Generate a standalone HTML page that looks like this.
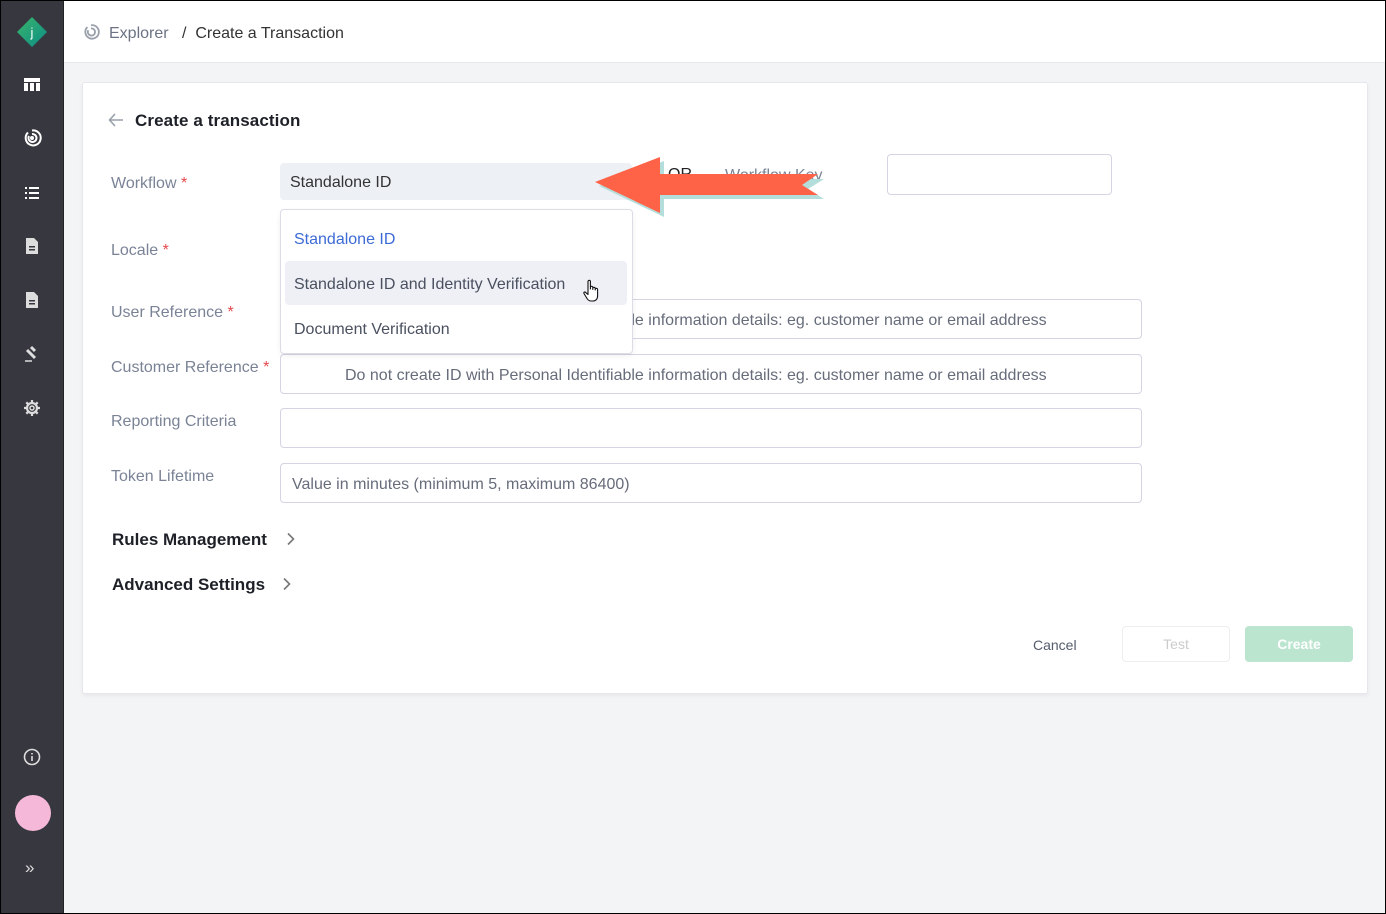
<!DOCTYPE html>
<html><head><meta charset="utf-8"><style>
*{box-sizing:border-box;margin:0;padding:0}
body{width:1386px;height:914px;overflow:hidden;font-family:"Liberation Sans",sans-serif;background:#f3f4f6;position:relative}
.frame{position:absolute;left:0;top:0;width:1386px;height:914px;border:1px solid #000;z-index:50;pointer-events:none}
.side{position:absolute;left:0;top:0;width:64px;height:914px;background:#373740;border-right:1px solid #222}
.ic{position:absolute;left:22px;width:20px;height:20px}
.top{position:absolute;left:64px;top:0;right:0;height:63px;background:#fff;border-bottom:1px solid #e8e9ee}
.card{position:absolute;left:82px;top:82px;width:1286px;height:612px;background:#fff;border:1px solid #e6e8ee;border-radius:3px;box-shadow:0 2px 4px rgba(0,0,0,.05)}
.lbl{position:absolute;left:111px;font-size:16px;color:#7a8396;margin-top:1px}
.lbl b{color:#e5484d;font-weight:normal}
.inp{position:absolute;left:280px;width:862px;height:40px;border:1px solid #d4d4e2;border-radius:4px;background:#fff;font-size:16px;color:#666c7a;line-height:42px}
.t{position:absolute;font-size:16px;margin-top:1px}
</style></head><body>
<div class="frame"></div>
<div class="side">
 <svg style="position:absolute;left:16px;top:16px" width="32" height="32" viewBox="0 0 32 32"><defs><linearGradient id="g" x1="0" y1="0" x2="1" y2="1"><stop offset="0" stop-color="#3bb36a"/><stop offset="1" stop-color="#0b8f86"/></linearGradient></defs><path d="M16 1L31 16 16 31 1 16z" fill="url(#g)"/><text x="16" y="21" font-size="13" fill="#fff" text-anchor="middle" font-family="Liberation Sans">j</text></svg>
 <svg class="ic" style="top:75px" viewBox="0 0 20 20" fill="#fff"><rect x="2" y="3" width="16" height="4"/><rect x="2" y="8" width="4" height="8"/><rect x="8" y="8" width="4" height="8"/><rect x="14" y="8" width="4" height="8"/></svg>
 <svg class="ic" style="top:128px" viewBox="0 0 20 20" fill="none" stroke="#fff" stroke-width="2"><path d="M6 4.5A7.5 7.5 0 1 0 10 2.5"/><path d="M7 8a4 4 0 1 0 3-2"/><circle cx="10" cy="10" r="1" fill="#fff"/></svg>
 <svg class="ic" style="top:183px" viewBox="0 0 20 20" fill="#fff"><rect x="3" y="4" width="2" height="2"/><rect x="7" y="4" width="10" height="2"/><rect x="3" y="9" width="2" height="2"/><rect x="7" y="9" width="10" height="2"/><rect x="3" y="14" width="2" height="2"/><rect x="7" y="14" width="10" height="2"/></svg>
 <svg class="ic" style="top:236px" viewBox="0 0 20 20"><path d="M4 2h8l4 4v12H4z" fill="#ddd"/><rect x="7" y="10" width="6" height="1.5" fill="#373740"/><rect x="7" y="13" width="6" height="1.5" fill="#373740"/></svg>
 <svg class="ic" style="top:290px" viewBox="0 0 20 20"><path d="M4 2h8l4 4v12H4z" fill="#ddd"/><rect x="7" y="10" width="6" height="1.5" fill="#373740"/><rect x="7" y="13" width="6" height="1.5" fill="#373740"/></svg>
 <svg class="ic" style="top:344px" viewBox="0 0 20 20" stroke="#ddd" stroke-width="3" fill="none"><path d="M5 6l8 8"/><path d="M9 3l4 4"/><path d="M3 17h7" stroke-width="1.5"/></svg>
 <svg class="ic" style="top:398px" viewBox="0 0 20 20" fill="none" stroke="#ddd" stroke-width="2.2"><circle cx="10" cy="10" r="5"/><circle cx="10" cy="10" r="2" stroke-width="1.5"/><path d="M10 2v3M10 15v3M2 10h3M15 10h3M4.3 4.3l2 2M13.7 13.7l2 2M4.3 15.7l2-2M13.7 6.3l2-2"/></svg>
 <svg class="ic" style="top:747px" viewBox="0 0 20 20" fill="none" stroke="#ddd" stroke-width="1.6"><circle cx="10" cy="10" r="7.5"/><path d="M10 9v5M10 6v1.5"/></svg>
 <div style="position:absolute;left:15px;top:795px;width:36px;height:36px;border-radius:50%;background:#f5b8d9"></div>
 <div style="position:absolute;left:25px;top:858px;color:#ddd;font-size:17px">»</div>
</div>
<div class="top">
 <svg style="position:absolute;left:18px;top:23px" width="18" height="18" viewBox="0 0 20 20" fill="none" stroke="#9aa0ab" stroke-width="2"><path d="M6 4.5A7.5 7.5 0 1 0 10 2.5"/><path d="M7 8a4 4 0 1 0 3-2"/></svg>
 <div class="t" style="left:45px;top:24px;font-size:16px;color:#6b7384">Explorer</div>
 <div class="t" style="left:118px;top:24px;font-size:16px;color:#333">/ &nbsp;Create a Transaction</div>
</div>
<div class="card"></div>
<svg style="position:absolute;left:108px;top:113px" width="16" height="14" viewBox="0 0 16 14" fill="none" stroke="#9aa0ab" stroke-width="1.6"><path d="M15 7H2M7 1L1.5 7 7 13"/></svg>
<div class="t" style="left:135px;top:110px;font-size:17px;color:#1d2027;font-weight:bold;letter-spacing:.1px">Create a transaction</div>
<div class="lbl" style="top:174px">Workflow <b>*</b></div>
<div class="lbl" style="top:241px">Locale <b>*</b></div>
<div class="lbl" style="top:303px">User Reference <b>*</b></div>
<div class="lbl" style="top:358px">Customer Reference <b>*</b></div>
<div class="lbl" style="top:412px">Reporting Criteria</div>
<div class="lbl" style="top:467px">Token Lifetime</div>
<div style="position:absolute;left:280px;top:163px;width:352px;height:37px;background:#edf0f5;border-radius:4px;font-size:16px;color:#333;line-height:39px;padding-left:10px">Standalone ID</div>
<div class="t" style="left:668px;top:165px;color:#222">OR</div>
<div class="t" style="left:725px;top:166px;color:#7a8396">Workflow Key</div>
<div style="position:absolute;left:887px;top:154px;width:225px;height:41px;border:1px solid #d4d4e2;border-radius:4px"></div>
<div class="inp" style="top:299px;padding-left:64px">Do not create ID with Personal Identifiable information details: eg. customer name or email address</div>
<div class="inp" style="top:354px;padding-left:64px">Do not create ID with Personal Identifiable information details: eg. customer name or email address</div>
<div class="inp" style="top:408px"></div>
<div class="inp" style="top:463px;padding-left:11px">Value in minutes (minimum 5, maximum 86400)</div>
<div style="position:absolute;left:280px;top:209px;width:353px;height:145px;background:#fff;border:1px solid #dcdce6;border-radius:4px;box-shadow:0 2px 6px rgba(0,0,0,.06)">
 <div style="position:absolute;left:4px;top:51px;width:342px;height:44px;background:#eef0f5;border-radius:4px"></div>
 <div class="t" style="left:13px;top:20px;color:#3c6ad6">Standalone ID</div>
 <div class="t" style="left:13px;top:65px;color:#4a5060">Standalone ID and Identity Verification</div>
 <div class="t" style="left:13px;top:110px;color:#4a5060">Document Verification</div>
 <svg style="position:absolute;left:302px;top:69px" width="16" height="24" viewBox="0 0 16 24"><path d="M5 2.5a1.2 1.2 0 0 1 2.4 0V10h0V8.5a1.2 1.2 0 0 1 2.4 0V10.5V9.5a1.2 1.2 0 0 1 2.4 0V11V10.5a1.2 1.2 0 0 1 2.4 0V17c0 3-2 5-4.5 5H8c-2 0-3-1-4-2.5L1 14.5c-.6-1 .6-2 1.5-1.2L5 15.5z" fill="#fff" stroke="#111" stroke-width="1.1" stroke-linejoin="round"/></svg>
</div>
<svg style="position:absolute;left:590px;top:150px" width="240" height="75" viewBox="590 150 240 75">
 <path d="M599 186L664 161V179H824L808 189L824 199H664V217Z" fill="#b3dedb"/>
 <path d="M595 182L660 157V174H818L802 185L818 195H660V213Z" fill="#ff6347"/>
</svg>
<div class="t" style="left:112px;top:529px;font-size:17px;color:#1d2027;font-weight:bold">Rules Management</div>
<svg style="position:absolute;left:286px;top:532px" width="10" height="14" viewBox="0 0 10 14" fill="none" stroke="#777" stroke-width="1.6"><path d="M2 1.5L7.5 7 2 12.5"/></svg>
<div class="t" style="left:112px;top:574px;font-size:17px;color:#1d2027;font-weight:bold">Advanced Settings</div>
<svg style="position:absolute;left:282px;top:577px" width="10" height="14" viewBox="0 0 10 14" fill="none" stroke="#777" stroke-width="1.6"><path d="M2 1.5L7.5 7 2 12.5"/></svg>
<div class="t" style="left:1033px;top:636px;font-size:14px;color:#555c6c">Cancel</div>
<div style="position:absolute;left:1122px;top:626px;width:108px;height:36px;border:1px solid #eee;border-radius:4px;text-align:center;line-height:34px;font-size:14px;color:#ccc">Test</div>
<div style="position:absolute;left:1245px;top:626px;width:108px;height:36px;background:#bce5d0;border-radius:4px;text-align:center;line-height:36px;font-size:14px;color:#fff;font-weight:bold">Create</div>
</body></html>
